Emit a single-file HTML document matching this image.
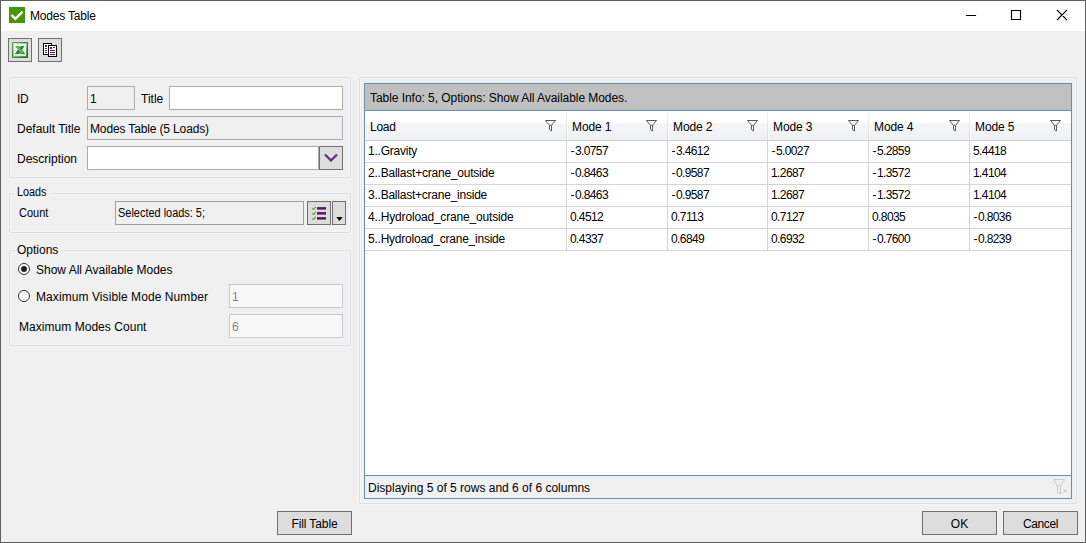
<!DOCTYPE html>
<html><head><meta charset="utf-8"><title>Modes Table</title>
<style>
*{box-sizing:border-box;margin:0;padding:0}
html,body{width:1086px;height:543px;overflow:hidden;background:#f0f0f0}
body{position:relative;font-family:"Liberation Sans",sans-serif;font-size:12px;color:#000;line-height:14px}
.a{position:absolute}
.t{position:absolute;white-space:nowrap;height:14px;line-height:14px}
.tb{position:absolute;border:1px solid #abadb3;background:#fff;height:24px}
.tb.d{background:#f0f0f0;border-color:#adadad}
.tb .t{left:2px;top:5px}
.gb{position:absolute;border:1px solid #d5dfe5;border-radius:2px;box-shadow:0 0 0 1px #f5f5f5,inset 0 0 0 1px #f5f5f5}
.gl{position:absolute;background:#f0f0f0;padding:0 2px;height:14px;line-height:14px;white-space:nowrap}
.btn{position:absolute;border:1px solid #707070;background:#dddddd;height:24px;text-align:center;line-height:24px;white-space:nowrap}
.radio{position:absolute;width:12px;height:12px;border:1px solid #333;border-radius:50%;background:#fff}
.hc{position:absolute;top:0;height:29px}
.hc:after{content:"";position:absolute;right:0;top:0;width:1px;height:29px;background:linear-gradient(#f2f2f2,#d9d9dc)}
.hc:before{content:"";position:absolute;left:0;top:0;width:1px;height:29px;background:linear-gradient(#fff,#f9f9fa)}
.hc.last:after{display:none}
.hc .t{left:5px;top:9px}
.row{position:absolute;left:0;width:706px;height:22px;border-bottom:1px solid #d4d4d4}
.c{position:absolute;top:0;height:21px;border-right:1px solid #d4d4d4}
.c.last{border-right:0}
.c .t{left:3px;top:3px}
.n{letter-spacing:-.6px}
</style></head><body>
<div class="a" style="left:0;top:0;width:1086px;height:31px;background:#fff"></div>
<div class="a" style="left:9px;top:7px;width:16px;height:16px;background:#47950a"><svg width="16" height="16" viewBox="0 0 16 16"><path d="M2.4 7.9 L6.4 11.9 L13.6 4.6" fill="none" stroke="#fff" stroke-width="2.4"/></svg></div>
<div class="t" style="left:30px;top:9px;letter-spacing:-.18px">Modes Table</div>
<svg class="a" style="left:960px;top:0" width="126" height="31" viewBox="0 0 126 31"><path d="M6.5 15.5h9M51.5 10.5h9v9h-9zM97.4 10.4l9.2 9.2M106.6 10.4l-9.2 9.2" fill="none" stroke="#000" stroke-width="1.15" stroke-linecap="square"/></svg>
<div class="btn" style="left:8px;top:38px;width:24px"></div>
<div class="btn" style="left:38px;top:38px;width:24px"></div>
<svg class="a" style="left:12px;top:42px" width="16" height="16" viewBox="0 0 16 16"><defs><linearGradient id="xg" x1="0" y1="0" x2="1" y2="1"><stop offset="0" stop-color="#5a9e58"/><stop offset="0.5" stop-color="#3f8a3f"/><stop offset="1" stop-color="#1d5f20"/></linearGradient><linearGradient id="xh" x1="0" y1="0" x2="1" y2="1"><stop offset="0" stop-color="#cfe8cc"/><stop offset="0.5" stop-color="#8cc28a"/><stop offset="1" stop-color="#3f8f42"/></linearGradient><linearGradient id="xw" x1="0" y1="0" x2="0" y2="1"><stop offset="0" stop-color="#fff"/><stop offset="0.7" stop-color="#fbfdfb"/><stop offset="1" stop-color="#d4e8d2"/></linearGradient></defs><rect width="16" height="16" fill="url(#xg)"/><rect x="1" y="1" width="14" height="14" fill="url(#xh)"/><rect x="2" y="2" width="12" height="12" fill="url(#xw)"/><path d="M3 4h4.3l.9 1.3l.9-1.3h3.6l-2.6 3.6l3 4.2h-4.6l-.7-1.2l-.6 1.2h-4.2l3-4.2z" fill="#238a2a"/><path d="M3.4 4.2h2.9l6 7.4h-2.9z" fill="#66bf63"/><path d="M3 11.8h4.2l.3-.6h-4.1zM8.5 11.8h4.6l-.4-.6h-4.5z" fill="#145c1a"/></svg>
<svg class="a" style="left:42px;top:42px" width="16" height="16" viewBox="0 0 16 16" shape-rendering="crispEdges"><rect x="1.5" y="1.5" width="8" height="11" rx="0" fill="#fff" stroke="#000" shape-rendering="auto"/><rect x="6.5" y="3.5" width="8" height="11" rx="0" fill="#fbfbfb" stroke="#000" shape-rendering="auto"/><g fill="#5a1a72"><rect x="3" y="3" width="2" height="2"/><rect x="3" y="6" width="2" height="1"/><rect x="3" y="8" width="2" height="1"/><rect x="3" y="10" width="2" height="1"/><rect x="8" y="5" width="2" height="2"/><rect x="11" y="5" width="2" height="1"/><rect x="8" y="8" width="5" height="1"/><rect x="8" y="10" width="5" height="1"/><rect x="8" y="12" width="5" height="1"/></g></svg>
<div class="gb" style="left:9px;top:77px;width:342px;height:101px"></div>
<div class="t" style="left:17px;top:92px;letter-spacing:-.3px">ID</div>
<div class="tb d" style="left:87px;top:86px;width:48px"><div class="t">1</div></div>
<div class="t" style="left:141px;top:92px">Title</div>
<div class="tb" style="left:169px;top:86px;width:174px"></div>
<div class="t" style="left:17px;top:122px">Default Title</div>
<div class="tb d" style="left:87px;top:116px;width:256px"><div class="t" style="letter-spacing:-.14px">Modes Table (5 Loads)</div></div>
<div class="t" style="left:17px;top:152px">Description</div>
<div class="tb" style="left:87px;top:146px;width:232px"></div>
<div class="btn" style="left:319px;top:146px;width:24px"><svg class="a" style="left:0;top:0" width="22" height="22" viewBox="0 0 22 22"><path d="M5 7.5l6 6l6-6" fill="none" stroke="#5b2d82" stroke-width="2.2"/></svg></div>
<div class="gb" style="left:9px;top:193px;width:342px;height:40px"></div>
<div class="gl" style="left:15px;top:185px;width:37px"><div class="t" style="left:2px;top:0;transform:scaleX(.9);transform-origin:0 0">Loads</div></div>
<div class="t" style="left:19px;top:206px;transform:scaleX(.915);transform-origin:0 0">Count</div>
<div class="tb d" style="left:115px;top:201px;width:189px;border-color:#a0a0a0"><div class="t" style="left:2px;top:4px;transform:scaleX(.912);transform-origin:0 0">Selected loads: 5;</div></div>
<div class="btn" style="left:307px;top:201px;width:24px"></div>
<div class="btn" style="left:332px;top:201px;width:14px"></div>
<svg class="a" style="left:311px;top:205px" width="16" height="16" viewBox="0 0 16 16"><g fill="#521a66"><rect x="6" y="2.1" width="9" height="2.5"/><rect x="6" y="7.1" width="9" height="2.5"/><rect x="6" y="12.1" width="9" height="2.5"/></g><g fill="none" stroke="#4c9a2a" stroke-width="1.05"><path d="M1.3 3.3l1.2 1.2l2.2-2.6"/><path d="M1.3 8.3l1.2 1.2l2.2-2.6"/><path d="M1.3 13.3l1.2 1.2l2.2-2.6"/></g></svg>
<svg class="a" style="left:336px;top:217px" width="7" height="4" viewBox="0 0 7 4"><path d="M0.3 0h6.4l-3.2 3.9z" fill="#000"/></svg>
<div class="gb" style="left:9px;top:250px;width:342px;height:96px"></div>
<div class="gl" style="left:15px;top:243px">Options</div>
<div class="radio" style="left:18px;top:263px"><div class="a" style="left:2px;top:2px;width:6px;height:6px;border-radius:50%;background:#1e1e1e"></div></div>
<div class="t" style="left:36px;top:263px">Show All Available Modes</div>
<div class="radio" style="left:18px;top:290px"></div>
<div class="t" style="left:36px;top:290px;letter-spacing:.08px">Maximum Visible Mode Number</div>
<div class="tb d" style="left:229px;top:284px;width:114px;border-color:#c9cacd;background:#f8f8f8"><div class="t" style="color:#838383">1</div></div>
<div class="t" style="left:19px;top:320px;letter-spacing:.04px">Maximum Modes Count</div>
<div class="tb d" style="left:229px;top:314px;width:114px;border-color:#c9cacd;background:#f8f8f8"><div class="t" style="color:#838383">6</div></div>
<div class="btn" style="left:277px;top:511px;width:75px;letter-spacing:-.11px">Fill Table</div>
<div class="btn" style="left:922px;top:511px;width:75px">OK</div>
<div class="btn" style="left:1003px;top:511px;width:75px;letter-spacing:-.38px">Cancel</div>
<div class="gb" style="left:359px;top:77px;width:718px;height:427px"></div>
<div class="a" style="left:364px;top:83px;width:708px;height:416px;border:1px solid #688caf;background:#fff">
<div class="a" style="left:0;top:0;width:706px;height:27px;background:#c0c0c0;border-bottom:1px solid #688caf"><div class="t" style="left:5px;top:7px;letter-spacing:-.053px">Table Info: 5, Options: Show All Available Modes.</div></div>
<div class="a" style="left:0;top:27px;width:706px;height:30px;border-bottom:1px solid #d0d0d0;background:linear-gradient(#fff 0,#fff 12px,#f5f6f8 12px,#eff0f3 29px)">
<div class="hc" style="left:0px;width:202px"><div class="t" style="letter-spacing:-.25px">Load</div></div>
<div class="a" style="left:180px;top:9px;width:12px;height:13px"><svg width="12" height="13" viewBox="0 0 12 13"><path d="M0.5 0.5h10l-4 4.8v5.6l-2-1.3v-4.3z" fill="#fff" stroke="#454545" stroke-width=".9"/><path d="M4.5 5.3h2" stroke="#454545" stroke-width=".8"/></svg></div>
<div class="hc" style="left:202px;width:101px"><div class="t" style="letter-spacing:-.1px">Mode 1</div></div>
<div class="a" style="left:281px;top:9px;width:12px;height:13px"><svg width="12" height="13" viewBox="0 0 12 13"><path d="M0.5 0.5h10l-4 4.8v5.6l-2-1.3v-4.3z" fill="#fff" stroke="#454545" stroke-width=".9"/><path d="M4.5 5.3h2" stroke="#454545" stroke-width=".8"/></svg></div>
<div class="hc" style="left:303px;width:100px"><div class="t" style="letter-spacing:-.1px">Mode 2</div></div>
<div class="a" style="left:382px;top:9px;width:12px;height:13px"><svg width="12" height="13" viewBox="0 0 12 13"><path d="M0.5 0.5h10l-4 4.8v5.6l-2-1.3v-4.3z" fill="#fff" stroke="#454545" stroke-width=".9"/><path d="M4.5 5.3h2" stroke="#454545" stroke-width=".8"/></svg></div>
<div class="hc" style="left:403px;width:101px"><div class="t" style="letter-spacing:-.1px">Mode 3</div></div>
<div class="a" style="left:483px;top:9px;width:12px;height:13px"><svg width="12" height="13" viewBox="0 0 12 13"><path d="M0.5 0.5h10l-4 4.8v5.6l-2-1.3v-4.3z" fill="#fff" stroke="#454545" stroke-width=".9"/><path d="M4.5 5.3h2" stroke="#454545" stroke-width=".8"/></svg></div>
<div class="hc" style="left:504px;width:101px"><div class="t" style="letter-spacing:-.1px">Mode 4</div></div>
<div class="a" style="left:583.5px;top:9px;width:12px;height:13px"><svg width="12" height="13" viewBox="0 0 12 13"><path d="M0.5 0.5h10l-4 4.8v5.6l-2-1.3v-4.3z" fill="#fff" stroke="#454545" stroke-width=".9"/><path d="M4.5 5.3h2" stroke="#454545" stroke-width=".8"/></svg></div>
<div class="hc last" style="left:605px;width:101px"><div class="t" style="letter-spacing:-.1px">Mode 5</div></div>
<div class="a" style="left:684.7px;top:9px;width:12px;height:13px"><svg width="12" height="13" viewBox="0 0 12 13"><path d="M0.5 0.5h10l-4 4.8v5.6l-2-1.3v-4.3z" fill="#fff" stroke="#454545" stroke-width=".9"/><path d="M4.5 5.3h2" stroke="#454545" stroke-width=".8"/></svg></div>
</div>
<div class="row" style="top:57px">
<div class="c" style="left:0px;width:202px"><div class="t" style="letter-spacing:-0.23px">1..Gravity</div></div>
<div class="c" style="left:202px;width:101px"><div class="t n"><span style="letter-spacing:.4px;margin-left:.5px">-</span>3.0757</div></div>
<div class="c" style="left:303px;width:100px"><div class="t n"><span style="letter-spacing:.4px;margin-left:.5px">-</span>3.4612</div></div>
<div class="c" style="left:403px;width:101px"><div class="t n"><span style="letter-spacing:.4px;margin-left:.5px">-</span>5.0027</div></div>
<div class="c" style="left:504px;width:101px"><div class="t n"><span style="letter-spacing:.4px;margin-left:.5px">-</span>5.2859</div></div>
<div class="c last" style="left:605px;width:101px"><div class="t n">5.4418</div></div>
</div>
<div class="row" style="top:79px">
<div class="c" style="left:0px;width:202px"><div class="t" style="letter-spacing:-0.22px">2..Ballast+crane_outside</div></div>
<div class="c" style="left:202px;width:101px"><div class="t n"><span style="letter-spacing:.4px;margin-left:.5px">-</span>0.8463</div></div>
<div class="c" style="left:303px;width:100px"><div class="t n"><span style="letter-spacing:.4px;margin-left:.5px">-</span>0.9587</div></div>
<div class="c" style="left:403px;width:101px"><div class="t n">1.2687</div></div>
<div class="c" style="left:504px;width:101px"><div class="t n"><span style="letter-spacing:.4px;margin-left:.5px">-</span>1.3572</div></div>
<div class="c last" style="left:605px;width:101px"><div class="t n">1.4104</div></div>
</div>
<div class="row" style="top:101px">
<div class="c" style="left:0px;width:202px"><div class="t" style="letter-spacing:-0.235px">3..Ballast+crane_inside</div></div>
<div class="c" style="left:202px;width:101px"><div class="t n"><span style="letter-spacing:.4px;margin-left:.5px">-</span>0.8463</div></div>
<div class="c" style="left:303px;width:100px"><div class="t n"><span style="letter-spacing:.4px;margin-left:.5px">-</span>0.9587</div></div>
<div class="c" style="left:403px;width:101px"><div class="t n">1.2687</div></div>
<div class="c" style="left:504px;width:101px"><div class="t n"><span style="letter-spacing:.4px;margin-left:.5px">-</span>1.3572</div></div>
<div class="c last" style="left:605px;width:101px"><div class="t n">1.4104</div></div>
</div>
<div class="row" style="top:123px">
<div class="c" style="left:0px;width:202px"><div class="t" style="letter-spacing:-0.18px">4..Hydroload_crane_outside</div></div>
<div class="c" style="left:202px;width:101px"><div class="t n">0.4512</div></div>
<div class="c" style="left:303px;width:100px"><div class="t n">0.7113</div></div>
<div class="c" style="left:403px;width:101px"><div class="t n">0.7127</div></div>
<div class="c" style="left:504px;width:101px"><div class="t n">0.8035</div></div>
<div class="c last" style="left:605px;width:101px"><div class="t n"><span style="letter-spacing:.4px;margin-left:.5px">-</span>0.8036</div></div>
</div>
<div class="row" style="top:145px">
<div class="c" style="left:0px;width:202px"><div class="t" style="letter-spacing:-0.23px">5..Hydroload_crane_inside</div></div>
<div class="c" style="left:202px;width:101px"><div class="t n">0.4337</div></div>
<div class="c" style="left:303px;width:100px"><div class="t n">0.6849</div></div>
<div class="c" style="left:403px;width:101px"><div class="t n">0.6932</div></div>
<div class="c" style="left:504px;width:101px"><div class="t n"><span style="letter-spacing:.4px;margin-left:.5px">-</span>0.7600</div></div>
<div class="c last" style="left:605px;width:101px"><div class="t n"><span style="letter-spacing:.4px;margin-left:.5px">-</span>0.8239</div></div>
</div>
<div class="a" style="left:0;top:391px;width:706px;height:23px;background:#f0f0f0;border-top:1px solid #688caf"><div class="t" style="left:3px;top:5px">Displaying 5 of 5 rows and 6 of 6 columns</div>
<svg class="a" style="left:688px;top:3px" width="16" height="17" viewBox="0 0 16 17"><path d="M0.5 0.5h11l-4 6.5v8l-3-1.5v-6.5z" fill="none" stroke="#cbcbcb" stroke-width="1"/><path d="M4.5 7h3M10.3 10.3l3.4 3.4M13.7 10.3l-3.4 3.4" stroke="#cbcbcb" stroke-width="1" fill="none"/></svg></div>
</div>
<div class="a" style="left:0;top:0;width:1086px;height:543px;border:1px solid #5f5f5f"></div>
</body></html>
